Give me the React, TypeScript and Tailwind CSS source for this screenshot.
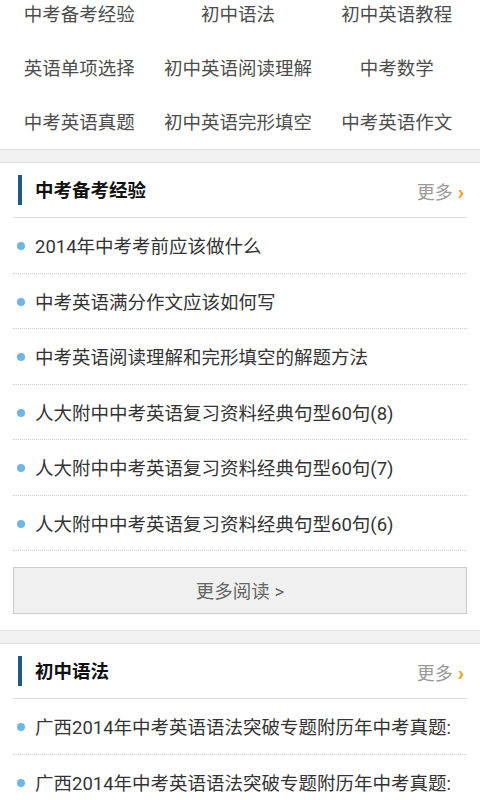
import React from 'react';

const navLinks = [
  '中考备考经验', '初中语法', '初中英语教程',
  '英语单项选择', '初中英语阅读理解', '中考数学',
  '中考英语真题', '初中英语完形填空', '中考英语作文',
];

const sections = [
  {
    title: '中考备考经验',
    items: [
      '2014年中考考前应该做什么',
      '中考英语满分作文应该如何写',
      '中考英语阅读理解和完形填空的解题方法',
      '人大附中中考英语复习资料经典句型60句(8)',
      '人大附中中考英语复习资料经典句型60句(7)',
      '人大附中中考英语复习资料经典句型60句(6)',
    ],
    showMore: true,
  },
  {
    title: '初中语法',
    items: [
      '广西2014年中考英语语法突破专题附历年中考真题:',
      '广西2014年中考英语语法突破专题附历年中考真题:',
    ],
    showMore: false,
  },
];

function Band() {
  return <div className="h-[14px] bg-[#f2f2f2] border-y border-[#e0e0e0]" />;
}

function Section({ title, items, showMore }: { title: string; items: string[]; showMore: boolean }) {
  return (
    <div>
      <div className="mx-[13px] h-[55px] flex items-center border-b border-[#dcdcdc] pl-[5px] pr-[3px]">
        <div className="w-[4px] h-[30px] bg-[#1b5a8c]" />
        <div className="ml-[13px] pt-[4px] text-[18.5px] font-bold text-[#111]">{title}</div>
        <div className="ml-auto pt-[4px] flex items-center text-[18px] text-[#9a9a9a]">
          更多
          <span className="ml-[5px] text-[21px] font-bold text-[#ff9900] leading-none">›</span>
        </div>
      </div>
      <ul className="mx-[13px]">
        {items.map((item, i) => (
          <li key={i} className="h-[55.5px] flex items-center border-b border-dotted border-[#cfcfcf] pl-[4px]">
            <span className="w-[8px] h-[8px] mt-[2px] rounded-full bg-[#6db6e6] shrink-0" />
            <span className="ml-[10px] pt-[6px] text-[18.5px] text-[#333] whitespace-nowrap overflow-hidden">{item}</span>
          </li>
        ))}
      </ul>
      {showMore && (
        <div className="mx-[13px] mt-[16px] mb-[16px] h-[47px] pt-[4px] border border-[#cccccc] bg-[#f0f0f0] flex items-center justify-center text-[18.5px] text-[#666]">
          更多阅读 &gt;
        </div>
      )}
    </div>
  );
}

export default function App() {
  return (
    <div
      className="w-[480px] h-[800px] overflow-hidden bg-white"
      style={{ fontFamily: 'Roboto, "Noto Sans CJK SC", sans-serif' }}
    >
      <div className="grid grid-cols-3 pr-[4px] mt-[-13px]">
        {navLinks.map((link) => (
          <div key={link} className="h-[54px] pt-[4px] flex items-center justify-center text-[18.5px] text-[#4d4d4d]">
            {link}
          </div>
        ))}
      </div>
      <Band />
      <Section {...sections[0]} />
      <Band />
      <Section {...sections[1]} />
    </div>
  );
}
